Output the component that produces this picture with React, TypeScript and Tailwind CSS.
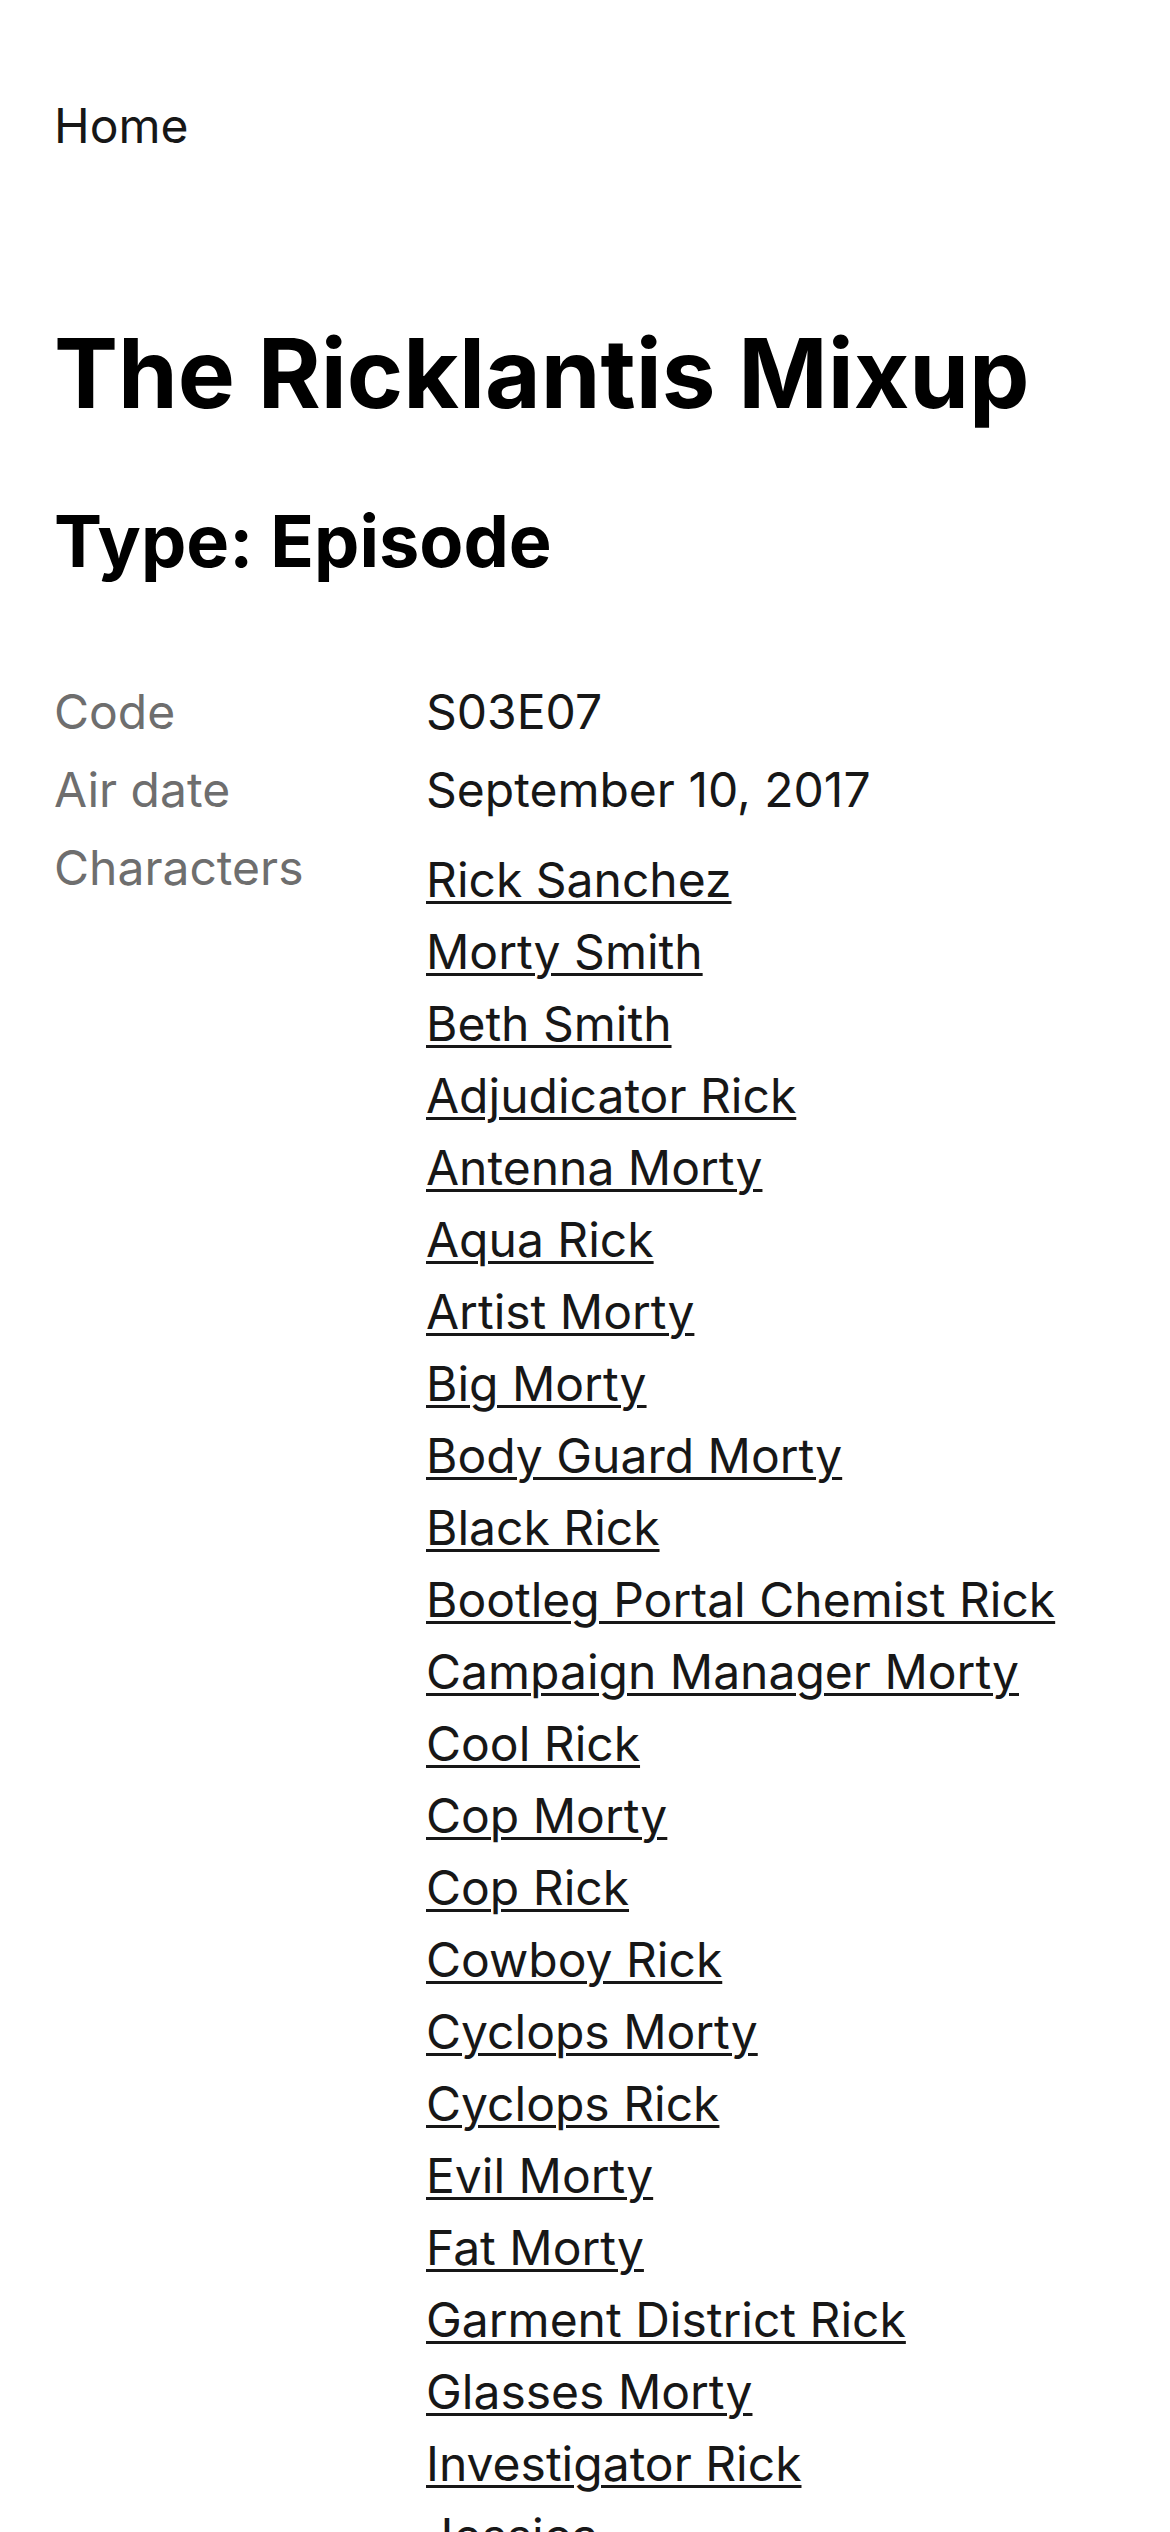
const characters = [
  "Rick Sanchez",
  "Morty Smith",
  "Beth Smith",
  "Adjudicator Rick",
  "Antenna Morty",
  "Aqua Rick",
  "Artist Morty",
  "Big Morty",
  "Body Guard Morty",
  "Black Rick",
  "Bootleg Portal Chemist Rick",
  "Campaign Manager Morty",
  "Cool Rick",
  "Cop Morty",
  "Cop Rick",
  "Cowboy Rick",
  "Cyclops Morty",
  "Cyclops Rick",
  "Evil Morty",
  "Fat Morty",
  "Garment District Rick",
  "Glasses Morty",
  "Investigator Rick",
  "Jessica",
  "Juggling Rick",
  "Lawyer Morty",
  "Mega Fruit Farmer Rick",
];

function DetailRow({ label, children }: { label: string; children: React.ReactNode }) {
  return (
    <div className="grid grid-cols-[372px_1fr]">
      <dt className="text-[48px] leading-[72px] text-[#6e6e6e]">{label}</dt>
      <dd className="text-[48px] leading-[72px] text-[#171717]">{children}</dd>
    </div>
  );
}

export default function App() {
  return (
    <div
      className="min-h-screen bg-white px-[54px] pt-[90px] text-[#171717]"
      style={{ fontFamily: "Inter, 'Noto Sans', sans-serif" }}
    >
      <nav>
        <a href="#" className="text-[48px] leading-[72px] text-[#171717]">
          Home
        </a>
      </nav>

      <h1 className="mt-[154px] text-[96px] font-bold leading-[1.2] text-black">
        The Ricklantis Mixup
      </h1>
      <h2 className="mt-[67px] text-[72px] font-bold leading-[1.2] text-black">
        Type: Episode
      </h2>

      <dl className="mt-[91px] flex flex-col gap-[6px]">
        <DetailRow label="Code">S03E07</DetailRow>
        <DetailRow label="Air date">September 10, 2017</DetailRow>
        <DetailRow label="Characters">
          <ul className="pt-[12px]">
            {characters.map((name) => (
              <li key={name}>
                <a
                  href="#"
                  className="underline decoration-[3px] underline-offset-[4px]"
                >
                  {name}
                </a>
              </li>
            ))}
          </ul>
        </DetailRow>
      </dl>
    </div>
  );
}
